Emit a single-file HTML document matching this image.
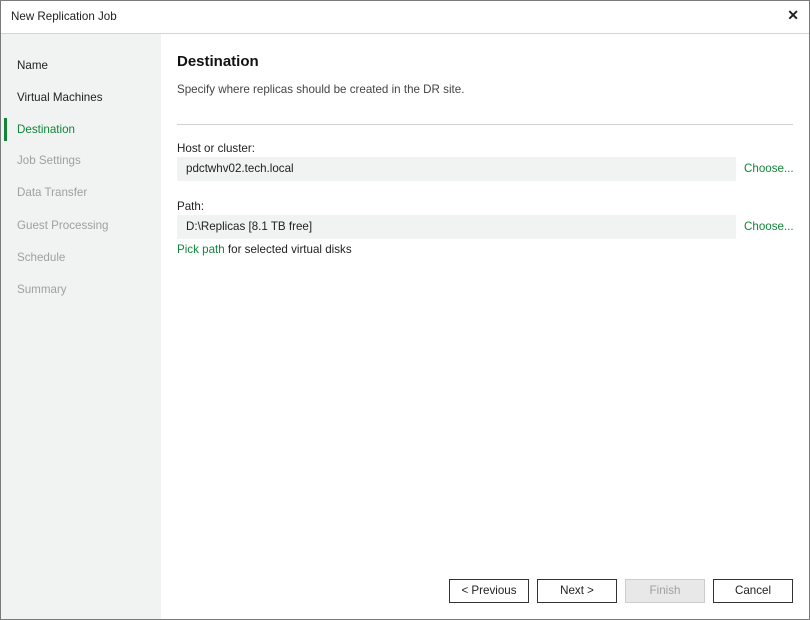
<!DOCTYPE html>
<html><head><style>
*{margin:0;padding:0;box-sizing:border-box}
body{width:810px;height:620px;background:#fff;font-family:"Liberation Sans",sans-serif;font-size:11.6px;color:#222;position:relative;overflow:hidden}
.frame{position:absolute;left:0;top:0;width:810px;height:620px;border:1px solid #7a7a7a}
.title{position:absolute;left:11px;top:10px}
.x{position:absolute;right:11px;top:7px;font-size:14px;font-weight:bold}
.hline{position:absolute;left:1px;top:33px;width:808px;height:1px;background:#d4d4d4}
.side{position:absolute;left:1px;top:34px;width:160px;height:585px;background:#f1f2f2}
.nav{position:absolute;left:17px}
.a{color:#222}.g{color:#a0a0a0}.sel{color:#12853a}
.bar{position:absolute;left:4px;top:118px;width:3px;height:23px;background:#12853a}
.abs{position:absolute}
.field{position:absolute;left:177px;width:559px;height:24px;background:#f1f2f2;padding:5px 0 0 9px}
.link{color:#12853a}
.btn{position:absolute;top:579px;height:24px;border:1px solid #333;background:#fff;text-align:center;line-height:22px}
</style></head><body>
<div class="frame"></div>
<div class="title">New Replication Job</div>
<div class="x">✕</div>
<div class="hline"></div>
<div class="side"></div>
<div class="nav a" style="top:59px">Name</div>
<div class="nav a" style="top:91px">Virtual Machines</div>
<div class="bar"></div>
<div class="nav sel" style="top:123px">Destination</div>
<div class="nav g" style="top:154px">Job Settings</div>
<div class="nav g" style="top:186px">Data Transfer</div>
<div class="nav g" style="top:219px">Guest Processing</div>
<div class="nav g" style="top:251px">Schedule</div>
<div class="nav g" style="top:283px">Summary</div>
<div class="abs" style="left:177px;top:53px;font-size:15px;font-weight:bold;color:#111">Destination</div>
<div class="abs" style="left:177px;top:83px;color:#444">Specify where replicas should be created in the DR site.</div>
<div class="abs" style="left:177px;top:124px;width:616px;height:1px;background:#d0d0d0"></div>
<div class="abs" style="left:177px;top:142px">Host or cluster:</div>
<div class="field" style="top:157px">pdctwhv02.tech.local</div>
<div class="abs link" style="left:744px;top:162px">Choose...</div>
<div class="abs" style="left:177px;top:200px">Path:</div>
<div class="field" style="top:215px">D:\Replicas [8.1 TB free]</div>
<div class="abs link" style="left:744px;top:220px">Choose...</div>
<div class="abs" style="left:177px;top:243px"><span class="link">Pick path</span> for selected virtual disks</div>
<div class="btn" style="left:449px;width:80px">&lt; Previous</div>
<div class="btn" style="left:537px;width:80px">Next &gt;</div>
<div class="btn" style="left:625px;width:80px;border-color:#ccc;background:#e8e8e8;color:#a0a0a0">Finish</div>
<div class="btn" style="left:713px;width:80px">Cancel</div>
</body></html>
